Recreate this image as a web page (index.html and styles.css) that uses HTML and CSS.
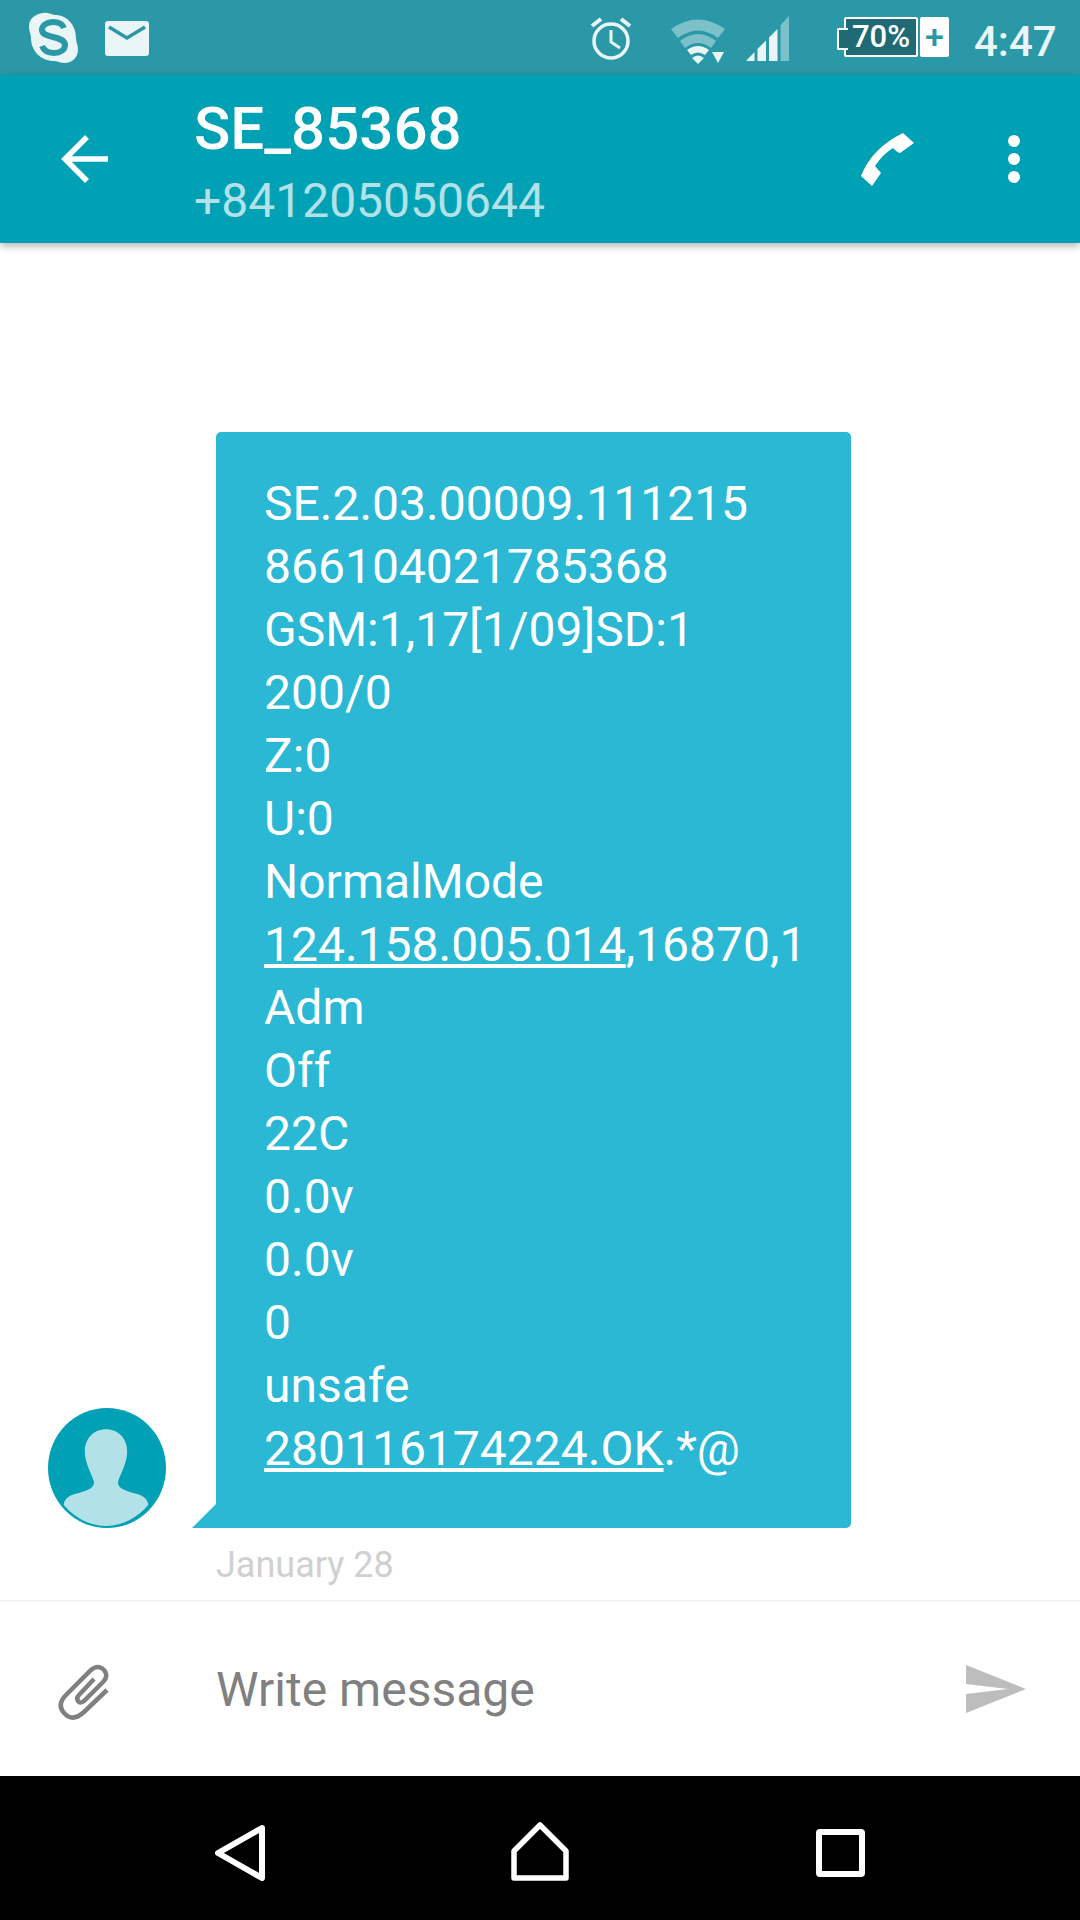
FILE: index.html
```html
<!DOCTYPE html>
<html lang="en">
<head>
  <meta charset="UTF-8" />
  <meta name="viewport" content="width=device-width, initial-scale=1.0" />
  <title>SE_85368</title>
  <link rel="stylesheet" href="styles.css">
</head>
<body>
  <div class="screen">
    <div class="status-bar">
      <svg class="ic-skype" width="50" height="52" viewBox="0 0 50 52">
        <path d="M14 1 C19 0 22 3 26 3 C38 3 47 13 47 26 C47 30 49 33 49 38 C49 45 43 51 36 51 C31 51 28 49 25 49 C12 49 2 39 2 26 C2 22 0 20 0 14 C0 7 6 2 14 1Z" fill="#e9f5f7"/>
        <path d="M35 16 C33 11 28 10 24 10 C18 10 13 13 13 18 C13 27 36 23 36 33 C36 38 31 41 25 41 C19 41 15 39 13 34" fill="none" stroke="#2a98a6" stroke-width="6"/>
      </svg>
      <svg class="ic-mail" width="44" height="35" viewBox="0 0 44 35">
        <rect width="44" height="35" rx="3" fill="#e9f5f7"/>
        <path d="M4 6 L22 17 L40 6" fill="none" stroke="#2a98a6" stroke-width="3.5"/>
      </svg>
      <div class="status-gap"></div>
      <svg class="ic-alarm" width="42" height="44" viewBox="0 0 42 44">
        <circle cx="21" cy="25" r="17" fill="none" stroke="#e9f5f7" stroke-width="3.5"/>
        <path d="M21 14 V26 L30 32" fill="none" stroke="#e9f5f7" stroke-width="3"/>
        <path d="M2 10 L11 3 M40 10 L31 3" stroke="#e9f5f7" stroke-width="4"/>
      </svg>
      <svg class="ic-wifi" width="58" height="48" viewBox="0 0 58 48">
        <path d="M2 13 Q29 -6 56 13 L49 22 Q29 7 9 22Z" fill="#7cc1ca"/>
        <path d="M11 25 Q29 11 47 25 L42 32 Q29 22 16 32Z" fill="#7cc1ca"/>
        <path d="M18 34 Q29 26 40 34 L36 39 Q29 34 22 39Z" fill="#e9f5f7"/>
        <path d="M23 42 Q29 37 35 42 L29 48Z" fill="#e9f5f7"/>
        <path d="M43 36 H55 L49 47Z" fill="#e9f5f7"/>
      </svg>
      <svg class="ic-signal" width="44" height="45" viewBox="0 0 44 45">
        <path d="M0 45 H8.5 V36Z" fill="#e9f5f7"/>
        <path d="M11.5 45 H20 V24.5 L11.5 33Z" fill="#e9f5f7"/>
        <path d="M23 45 H31.5 V13 L23 21.5Z" fill="#e9f5f7"/>
        <path d="M34.6 45 H43 V0 L34.6 9Z" fill="#7cc1ca"/>
      </svg>
      <div class="battery">
        <div class="battery-body">70%</div>
        <div class="battery-plus">+</div>
      </div>
      <div class="clock">4:47</div>
    </div>

    <div class="app-bar">
      <svg class="ic-back" width="48" height="48" viewBox="0 0 48 48">
        <path d="M47 24 H4 M26 2 L4 24 L26 46" fill="none" stroke="#fff" stroke-width="5.5"/>
      </svg>
      <div class="title-block">
        <div class="title">SE_85368</div>
        <div class="subtitle">+841205050644</div>
      </div>
      <svg class="ic-call" width="75" height="75" viewBox="0 0 75 75">
        <path d="M63 12 L74 22 L60 32 Q58 32 53 27 Q43 33 35 45 L41 52 L32 65 L21 55 Q32 27 63 12Z" fill="#fff"/>
      </svg>
      <div class="more">
        <span class="dot"></span>
        <span class="dot"></span>
        <span class="dot"></span>
      </div>
    </div>

    <div class="thread">
      <div class="msg-row">
        <svg class="avatar" width="120" height="120" viewBox="0 0 118 119">
          <ellipse cx="59" cy="59.5" rx="58.5" ry="59.5" fill="#00a1b4"/>
          <path d="M58 21 C70 21 79 30 79 43 C79 55 72 66 70 73 C69 79 76 82 84 84 C92 86 99 88 100 96 C90 108 75 117 58 117 C41 117 26 108 16 96 C17 88 24 86 32 84 C40 82 47 79 46 73 C44 66 37 55 37 43 C37 30 46 21 58 21Z" fill="#b2e2e8"/>
        </svg>
        <div class="bubble">
          SE.2.03.00009.111215<br>
          866104021785368<br>
          GSM:1,17[1/09]SD:1<br>
          200/0<br>
          Z:0<br>
          U:0<br>
          NormalMode<br>
          <a href="#">124.158.005.014</a>,16870,1<br>
          Adm<br>
          Off<br>
          22C<br>
          0.0v<br>
          0.0v<br>
          0<br>
          unsafe<br>
          <a href="#">280116174224.OK</a>.*@
        </div>
      </div>
      <div class="msg-date">January 28</div>
    </div>

    <div class="composer">
      <svg class="ic-clip" width="80" height="75" viewBox="0 0 80 75">
        <path d="M66 38 L43 60 Q32 70 24 62 Q15 53 25 43 L50 18 Q57 12 63 18 Q68 24 62 30 L43 49 Q39 52 37 49 Q35 46 38 43 L53 27" fill="none" stroke="#808080" stroke-width="4.5"/>
      </svg>
      <div class="placeholder">Write message</div>
      <svg class="ic-send" width="60" height="48" viewBox="0 0 60 48">
        <path d="M0 0 L60 24 L0 48 V29 L42 24 L0 19Z" fill="#bdbdbd"/>
      </svg>
    </div>

    <div class="nav-bar">
      <svg width="50" height="56" viewBox="0 0 50 56" class="ic-nav-back">
        <path d="M47 3 L3 28 L47 53Z" fill="none" stroke="#fff" stroke-width="6" stroke-linejoin="round"/>
      </svg>
      <svg width="58" height="59" viewBox="0 0 58 59" class="ic-nav-home">
        <path d="M29 3 L55 29 V56 H3 V29Z" fill="none" stroke="#fff" stroke-width="5.5" stroke-linejoin="round"/>
      </svg>
      <div class="nav-square"></div>
    </div>
  </div>
</body>
</html>
```

FILE: styles.css
```css
* {
  box-sizing: border-box;
}

body {
  margin: 0;
  font-family: Roboto, "Liberation Sans", sans-serif;
  background-color: #fff;
}

svg {
  display: block;
  flex-shrink: 0;
}

.screen {
  display: flex;
  flex-direction: column;
  width: 1080px;
  height: 1920px;
  overflow: hidden;
}

.status-bar {
  display: flex;
  align-items: flex-start;
  flex-shrink: 0;
  height: 75px;
  padding: 12px 0 0 29px;
  background-color: #2a98a6;
}

.ic-mail {
  margin: 9px 0 0 26px;
}

.status-gap {
  flex: 1;
}

.ic-alarm {
  margin: 4px 0 0;
}

.ic-wifi {
  margin: 4px 0 0 37px;
}

.ic-signal {
  margin: 4px 0 0 19px;
}

.battery {
  display: flex;
  gap: 2px;
  margin: 5px 0 0 54px;
  position: relative;
}

.battery-body {
  width: 74px;
  height: 40px;
  border: 2px solid #fff;
  border-radius: 2px;
  background-color: #1f6a74;
  color: #fff;
  font-size: 31px;
  font-weight: 500;
  line-height: 35px;
  text-align: center;
}

.battery-body::before {
  content: "";
  position: absolute;
  left: -7px;
  top: 11px;
  width: 9px;
  height: 18px;
  border: 2px solid #fff;
  border-right: none;
  border-radius: 2px 0 0 2px;
  background-color: #1f6a74;
}

.battery-plus {
  width: 29px;
  height: 40px;
  border-radius: 2px;
  background-color: #fff;
  color: #2a98a6;
  font-size: 34px;
  font-weight: 500;
  line-height: 38px;
  text-align: center;
}

.clock {
  width: 82px;
  margin: 5px 24px 0 25px;
  color: #e9f5f7;
  font-size: 42px;
  font-weight: 500;
  line-height: 50px;
}

.app-bar {
  display: flex;
  align-items: center;
  position: relative;
  z-index: 1;
  flex-shrink: 0;
  height: 168px;
  padding-left: 61px;
  background-color: #00a1b4;
  box-shadow: 0 3px 8px rgba(0, 0, 0, 0.3);
}

.title-block {
  flex: 1;
  margin-left: 85px;
  padding-top: 3px;
}

.title {
  color: #fff;
  font-size: 60px;
  font-weight: 500;
  line-height: 80px;
}

.subtitle {
  color: #b2e2e8;
  font-size: 48px;
  line-height: 64px;
}

.ic-call {
  margin: 0 93px 2px 0;
}

.more {
  display: flex;
  flex-direction: column;
  gap: 6px;
  margin-right: 60px;
}

.dot {
  width: 12px;
  height: 12px;
  border-radius: 50%;
  background-color: #fff;
}

.thread {
  display: flex;
  flex-direction: column;
  justify-content: flex-end;
  flex: 1;
  border-bottom: 2px solid #f5f5f5;
}

.msg-row {
  display: flex;
  align-items: flex-end;
  gap: 49px;
  padding-left: 47px;
}

.bubble {
  position: relative;
  width: 635px;
  padding: 40px 0 48px 48px;
  border-radius: 5px 5px 5px 0;
  background-color: #2ab8d4;
  color: #fff;
  font-size: 48px;
  line-height: 63px;
  white-space: nowrap;
}

.bubble::before {
  content: "";
  position: absolute;
  left: -24px;
  bottom: 0;
  border-style: solid;
  border-width: 0 0 24px 24px;
  border-color: transparent transparent #2ab8d4 transparent;
}

.bubble a {
  color: #fff;
  text-decoration: underline;
}

.msg-date {
  height: 72px;
  padding-left: 216px;
  color: #d0d0d0;
  font-size: 36px;
  line-height: 74px;
}

.composer {
  display: flex;
  align-items: center;
  flex-shrink: 0;
  height: 174px;
  padding-left: 41px;
  background-color: #fff;
}

.ic-clip {
  margin-right: 95px;
}

.placeholder {
  flex: 1;
  color: #808080;
  font-size: 48px;
}

.ic-send {
  margin-right: 54px;
}

.nav-bar {
  display: flex;
  align-items: center;
  flex-shrink: 0;
  height: 144px;
  padding: 10px 0 0 215px;
  background-color: #000;
}

.ic-nav-home {
  margin: 0 0 4px 246px;
}

.nav-square {
  width: 49px;
  height: 48px;
  margin-left: 247px;
  border: 6px solid #fff;
  border-radius: 4px;
}
```
